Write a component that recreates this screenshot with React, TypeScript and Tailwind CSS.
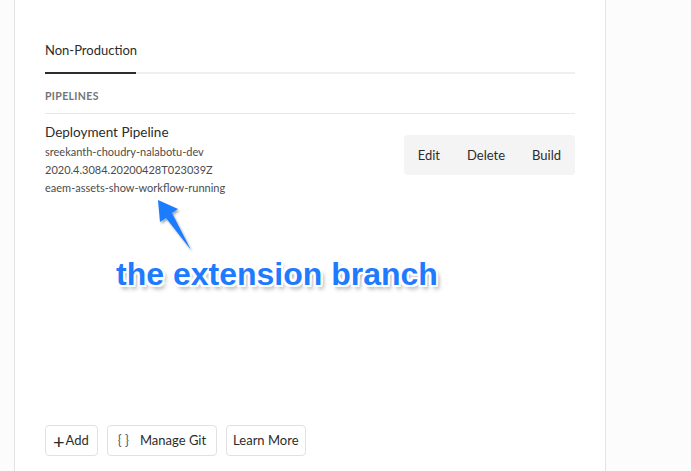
import React from "react";

export default function App() {
  return (
    <div className="relative h-[471px] w-[691px] overflow-hidden bg-[#fcfcfc] font-['Lato',sans-serif]">
      <div className="ml-[14px] flex h-[471px] w-[592px] flex-col border-x border-[#e3e3e3] bg-white px-[30px]">
        <div className="pt-[41px]">
          <div className="text-[13px] leading-[18px] text-[#2c2c2c]">Non-Production</div>
          <div className="mt-[13px] flex h-[2px] bg-[#efefef]">
            <div className="h-[2px] w-[91px] bg-[#2c2c2c]" />
          </div>
        </div>
        <div className="border-b border-[#e8e8e8] pb-[11px] pt-[17px] text-[10.5px] font-bold leading-[11px] tracking-[0.35px] text-[#747474]">
          PIPELINES
        </div>
        <div className="flex items-start justify-between pt-[9px]">
          <div className="flex flex-col">
            <div className="text-[13.5px] leading-[18px] text-[#2c2c2c]">Deployment Pipeline</div>
            <div className="mt-[2px] text-[11px] leading-[18px] text-[#4b4b4b]">sreekanth-choudry-nalabotu-dev</div>
            <div className="text-[11px] leading-[18px] text-[#4b4b4b]">2020.4.3084.20200428T023039Z</div>
            <div className="text-[11px] leading-[18px] text-[#4b4b4b]">eaem-assets-show-workflow-running</div>
          </div>
          <div className="mt-[12px] flex h-[40px] items-center gap-[27px] rounded-[4px] bg-[#f4f4f4] px-[14px] pt-[1px] text-[13px] text-[#2c2c2c]">
            <span>Edit</span>
            <span>Delete</span>
            <span>Build</span>
          </div>
        </div>
        <div className="flex-1" />
        <div className="mb-[15px] flex gap-[9px] text-[13px] text-[#2c2c2c]">
          <div className="flex h-[31px] items-center gap-[1px] rounded-[4px] border border-[#e1e1e1] pl-[7px] pr-[8px]">
            <span className="text-[20px] leading-none">+</span>
            <span>Add</span>
          </div>
          <div className="flex h-[31px] items-center gap-[11px] rounded-[4px] border border-[#e1e1e1] px-[10px]">
            <span className="text-[#555]">{"{ }"}</span>
            <span>Manage Git</span>
          </div>
          <div className="flex h-[31px] items-center rounded-[4px] border border-[#e1e1e1] px-[6px]">
            <span>Learn More</span>
          </div>
        </div>
      </div>

      <svg className="absolute left-0 top-0" width="691" height="471" viewBox="0 0 691 471">
        <defs>
          <filter id="sh" x="-50%" y="-50%" width="200%" height="200%">
            <feDropShadow dx="1.5" dy="2" stdDeviation="1.2" floodColor="#000" floodOpacity="0.35" />
          </filter>
        </defs>
        <polygon
          points="158,200 178,209 172,213 191,250 166,218 160,222"
          fill="#1a7bff"
          filter="url(#sh)"
        />
      </svg>

      <div className="absolute left-[116px] top-[255px] font-['Liberation_Sans',sans-serif] text-[32px] font-bold leading-[38px] text-[#1e7bff] [text-shadow:2px_0_0_#fff,-2px_0_0_#fff,0_2px_0_#fff,0_-2px_0_#fff,2px_2px_0_#fff,-2px_-2px_0_#fff,2px_-2px_0_#fff,-2px_2px_0_#fff,3px_4px_4px_rgba(0,0,0,0.35)]">
        the extension branch
      </div>
    </div>
  );
}
